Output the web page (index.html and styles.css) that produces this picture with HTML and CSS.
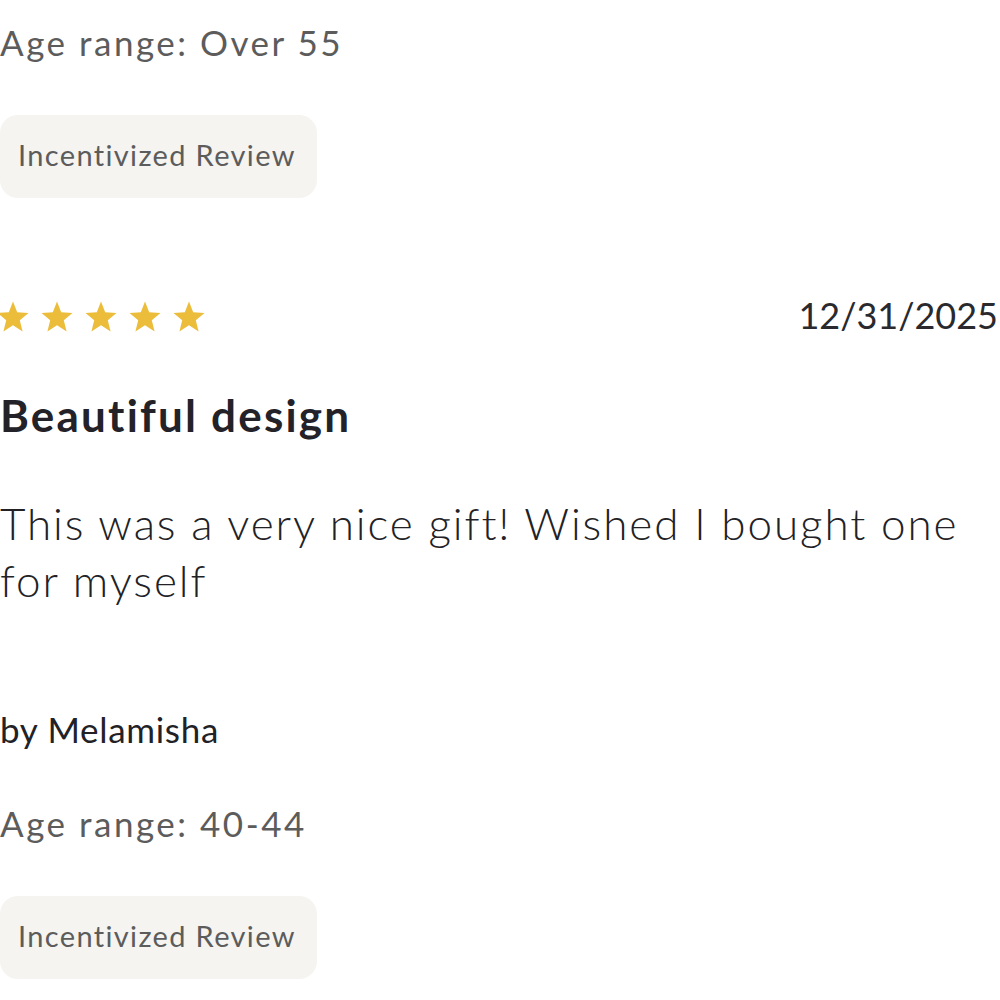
FILE: index.html
```html
<!DOCTYPE html>
<html lang="en">
<head>
<meta charset="utf-8">
<title>Reviews</title>
<link rel="stylesheet" href="styles.css">
</head>
<body>
<div class="page">
  <section class="review review-prev">
    <p class="age">Age range: Over 55</p>
    <span class="badge">Incentivized Review</span>
  </section>
  <section class="review">
    <div class="meta">
      <div class="stars" aria-label="5 stars">
        <svg class="star" viewBox="0 0 32 32"><polygon points="16,0.5 20.2,11.3 31.5,12 22.8,19.3 25.6,30.5 16,24.3 6.4,30.5 9.2,19.3 0.5,12 11.8,11.3"/></svg>
        <svg class="star" viewBox="0 0 32 32"><polygon points="16,0.5 20.2,11.3 31.5,12 22.8,19.3 25.6,30.5 16,24.3 6.4,30.5 9.2,19.3 0.5,12 11.8,11.3"/></svg>
        <svg class="star" viewBox="0 0 32 32"><polygon points="16,0.5 20.2,11.3 31.5,12 22.8,19.3 25.6,30.5 16,24.3 6.4,30.5 9.2,19.3 0.5,12 11.8,11.3"/></svg>
        <svg class="star" viewBox="0 0 32 32"><polygon points="16,0.5 20.2,11.3 31.5,12 22.8,19.3 25.6,30.5 16,24.3 6.4,30.5 9.2,19.3 0.5,12 11.8,11.3"/></svg>
        <svg class="star" viewBox="0 0 32 32"><polygon points="16,0.5 20.2,11.3 31.5,12 22.8,19.3 25.6,30.5 16,24.3 6.4,30.5 9.2,19.3 0.5,12 11.8,11.3"/></svg>
      </div>
      <span class="date">12/31/2025</span>
    </div>
    <h2 class="title">Beautiful design</h2>
    <p class="body">This was a very nice gift! Wished I bought one for myself</p>
    <p class="author">by Melamisha</p>
    <p class="age">Age range: 40-44</p>
    <span class="badge">Incentivized Review</span>
  </section>
</div>
</body>
</html>
```
FILE: styles.css
```css
html, body {
  margin: 0;
  padding: 0;
  background: #ffffff;
}
body {
  font-family: "Lato", "Liberation Sans", sans-serif;
  color: #222226;
}
.page {
  padding: 22px 2px 0 0;
  display: flex;
  flex-direction: column;
}
.review {
  display: flex;
  flex-direction: column;
  align-items: flex-start;
}
p, h2 {
  margin: 0;
}
.age {
  font-size: 35px;
  line-height: 40px;
  color: #5c5c5c;
  letter-spacing: 2.5px;
}
.badge {
  display: inline-block;
  margin-top: 53px;
  height: 83px;
  line-height: 80px;
  padding: 0 21px 0 18px;
  background: #f5f4f1;
  border-radius: 18px;
  font-size: 29px;
  color: #5c5c5c;
  letter-spacing: 1.35px;
  box-sizing: border-box;
}
.meta {
  margin-top: 100px;
  height: 40px;
  align-self: stretch;
  display: flex;
  align-items: center;
  justify-content: space-between;
}
.stars {
  display: flex;
  gap: 12px;
  margin-left: -3px;
  margin-top: -2px;
}
.star {
  width: 32px;
  height: 32px;
  fill: #ebbd3a;
}
.date {
  font-size: 36px;
  color: #2a2a2e;
  letter-spacing: 0;
  margin-bottom: 6px;
}
.title {
  margin-top: 52px;
  font-size: 44px;
  line-height: 50px;
  font-weight: 700;
  letter-spacing: 2.2px;
  color: #222228;
}
.body {
  margin-top: 55px;
  font-size: 44px;
  line-height: 57px;
  font-weight: 300;
  letter-spacing: 1.9px;
  color: #222226;
}
.author {
  margin-top: 100px;
  font-size: 35px;
  line-height: 40px;
  letter-spacing: 0.7px;
  color: #222226;
}
.age + .badge {
  margin-top: 53px;
}
.author + .age {
  margin-top: 54px;
}
```
